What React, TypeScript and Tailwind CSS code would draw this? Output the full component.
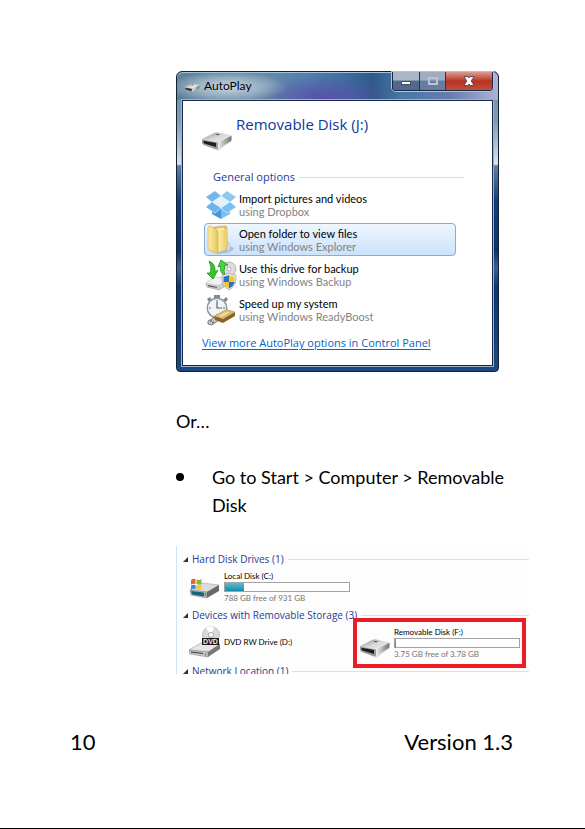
import type { ReactNode } from "react";

function DriveIcon({ className }: { className: string }) {
  return (
    <svg viewBox="0 0 32 20" className={className} aria-hidden="true">
      <defs>
        <linearGradient id="driveTop" x1="0" y1="0" x2="1" y2="1">
          <stop offset="0" stopColor="#8d8d8d" />
          <stop offset="0.5" stopColor="#d9d9d9" />
          <stop offset="1" stopColor="#f4f4f4" />
        </linearGradient>
        <linearGradient id="driveSide" x1="0" y1="0" x2="1" y2="0">
          <stop offset="0" stopColor="#efefef" />
          <stop offset="1" stopColor="#6f6f6f" />
        </linearGradient>
      </defs>
      <path d="M3 14 L17 20 L31 10 L29 8Z" fill="#000" opacity="0.12" />
      <path d="M1 8.500 Q1 7.500 3 7 L13 2 Q15 1 17 1.500 L29 4 Q31 4.500 30 5.500 L20 11 Q18 12 15 11.500Z" fill="url(#driveTop)" />
      <path d="M1 8.500 L17 11.500 V18 Q16 18.500 14 18 L3 14 Q1 13 1 12Z" fill="#9b9b9b" />
      <path d="M2.500 9.800 L15 12 V16 L5 13 Q3 12.500 2.500 11.500Z" fill="#1c1c1c" />
      <path d="M17 11.500 L30.500 4.800 V9 Q30 10 29 10.500 L17 18Z" fill="url(#driveSide)" />
      <path d="M16 3 L19 3.500 L17.500 4.300 L14.500 3.800Z" fill="#444" />
    </svg>
  );
}

function DropboxIcon() {
  return (
    <svg viewBox="0 0 32 30" className="h-[30px] w-8" aria-hidden="true">
      <path d="M10 1 L16 6 L7 12 L1 7Z" fill="#72b7ee" />
      <path d="M22 1 L31 7 L25 12 L16 6Z" fill="#8dc8f5" />
      <path d="M7 12 L16 18 L10 23 L1 17Z" fill="#6db3ec" />
      <path d="M25 12 L31 17 L22 23 L16 18Z" fill="#7dbef0" />
      <path d="M16 6 L25 12 L16 18 L7 12Z" fill="#e3f2fd" />
      <path d="M7 21.500 L10 23.500 L16 18.500 V29 L7 24Z" fill="#4794de" />
      <path d="M25 21.500 L22 23.500 L16 18.500 V29 L25 24Z" fill="#79bcf0" />
    </svg>
  );
}

function FolderIcon() {
  return (
    <svg viewBox="0 0 32 32" className="size-8" aria-hidden="true">
      <defs>
        <linearGradient id="folderFront" x1="0" y1="0" x2="1" y2="0">
          <stop offset="0" stopColor="#fdf0a8" />
          <stop offset="1" stopColor="#e8c55c" />
        </linearGradient>
      </defs>
      <path d="M20 20 L29 24 Q28 27 22 29 L12 30Z" fill="#6e87a5" opacity="0.4" />
      <path d="M23 18 L25 20 V26 L22 28Z" fill="#d5e1ec" stroke="#9badc2" strokeWidth="0.5" />
      <path d="M9 3 L20 2 Q22 2 22 4 V25 L9 27Z" fill="#e5c464" stroke="#c7a345" strokeWidth="0.6" />
      <path d="M10 5 L19 4 V25 H10Z" fill="#f8f3d5" />
      <path d="M13 6 L22 5 L23 25 L13 28Z" fill="url(#folderFront)" />
      <path d="M3 3 Q3 2 5 2 L12 6 Q13 6.5 13 8 V29 Q13 30 11 29 L4 26 Q3 25 3 24Z" fill="url(#folderFront)" stroke="#d1ad4c" strokeWidth="0.7" />
    </svg>
  );
}

function BackupIcon() {
  return (
    <svg viewBox="0 0 32 32" className="size-8" aria-hidden="true">
      <circle cx="24" cy="10" r="7" fill="#ddd" stroke="#999" strokeWidth="0.7" />
      <circle cx="24" cy="10" r="2" fill="#fff" stroke="#999" strokeWidth="0.7" />
      <path d="M1 24 L10 18 L22 20 V26 L14 31 L2 28Z" fill="#ccc" stroke="#888" strokeWidth="0.5" />
      <path d="M1 24 L10 18 L22 20 L14 26Z" fill="#f1f1f1" />
      <path d="M3 26 L12 28 V29 L3 27.200Z" fill="#555" />
      <path d="M4 2 Q11 5 10 13 L13 11 L8 20 L2 14 L5.500 14 Q7 8 4 2Z" fill="#34c92c" stroke="#168f13" strokeWidth="0.8" />
      <path d="M20 17 Q14 13 16 7 L13 8 L16 1 L23 6 L20 6 Q18 12 20 17Z" fill="#45d83a" stroke="#168f13" strokeWidth="0.8" />
      <path d="M24 14 Q27 16 31 16 Q32 27 24 31 Q16 27 17 16 Q21 16 24 14Z" fill="#eee" stroke="#888" strokeWidth="0.6" />
      <path d="M24 16 V23 H18.500 V17.500 Q21.500 17.500 24 16Z" fill="#2870c8" />
      <path d="M24 16 Q26.500 17.500 29.500 17.500 V23 H24Z" fill="#f5c62c" />
      <path d="M18.500 23 H24 V29.500 Q19.500 27.500 18.500 23Z" fill="#f5c62c" />
      <path d="M24 23 H29.500 Q28.500 27.500 24 29.500Z" fill="#2870c8" />
    </svg>
  );
}

function ReadyBoostIcon() {
  return (
    <svg viewBox="0 0 32 32" className="size-8" aria-hidden="true">
      <path d="M9 1 H15 V4 H9Z M2 5 L5 3 L7 6 L4 8Z M18 6 L21 3 L23 5 L21 8Z" fill="#7d898e" />
      <circle cx="12" cy="14" r="10.500" fill="#8b999e" />
      <circle cx="12" cy="14" r="9" fill="#f1f4f5" />
      <path d="M12 6 V8 M12 20 V22 M4 14 H6 M18 14 H20" stroke="#667" strokeWidth="1" />
      <path d="M12 8 V14 H17" stroke="#59666c" strokeWidth="1.200" fill="none" />
      <path d="M3 27 L10 23 L14 26 L7 31 L3 30Z" fill="#c8c8c8" stroke="#555" strokeWidth="0.7" />
      <path d="M5 27.500 L7 26.500 M7 29 L9 28" stroke="#444" strokeWidth="1" />
      <path d="M9 22 L20 16 Q22 15 24 16 L30 18 V22 L18 29 L10 26Z" fill="#8a6426" />
      <path d="M9 22 L20 16 Q22 15 24 16 L30 18 L18 25Z" fill="#d8b86d" />
      <path d="M13 22 L21 17.500 L25 18.500 L17 23Z" fill="#eed79b" />
    </svg>
  );
}

function LocalDiskIcon() {
  return (
    <svg viewBox="0 0 32 22" className="h-[22px] w-8" aria-hidden="true">
      <path d="M1 12 L13 5 L30 7 L18 14Z" fill="#dcdcdc" stroke="#999" strokeWidth="0.500" />
      <path d="M1 12 L18 14 V20 L2 17Z" fill="#bcbcbc" stroke="#777" strokeWidth="0.500" />
      <path d="M2 13 L15 14.500 V18.500 L3 16.500Z" fill="#17657c" />
      <path d="M18 14 L30 7 V13 L18 20Z" fill="#686868" />
      <path d="M16.500 15 V18" stroke="#31b431" strokeWidth="1.500" />
      <path d="M2 2 Q4 0 6.500 1 V6 Q4 5 2 7Z" fill="#ee6526" />
      <path d="M7.500 1.500 Q10 2.500 12.500 1 V6 Q10 7 7.500 6Z" fill="#83b938" />
      <path d="M2 8 Q4 6 6.500 7 V11 Q4 10 2 12Z" fill="#358bd7" />
      <path d="M7.500 7 Q10 8 12.500 7 V11 Q10 12 7.500 11Z" fill="#f8c733" />
    </svg>
  );
}

function DvdIcon() {
  return (
    <svg viewBox="0 0 32 32" className="size-8" aria-hidden="true">
      <circle cx="22" cy="9" r="8.500" fill="#d9d9d9" stroke="#aaa" strokeWidth="0.6" />
      <path d="M22 9 L17 2 A8.500 8.500 0 0 1 25 1Z" fill="#fff" />
      <circle cx="22" cy="9" r="2.500" fill="#fff" stroke="#888" strokeWidth="0.7" />
      <path d="M0 24 L12 17 L31 18 L19 26Z" fill="#e6e6e6" stroke="#888" strokeWidth="0.500" />
      <path d="M0 24 L19 26 V31 L1 28Z" fill="#c9c9c9" stroke="#777" strokeWidth="0.500" />
      <path d="M2 25.500 L14 27 V28 L2 26.500Z" fill="#333" />
      <path d="M19 26 L31 18 V23 L19 31Z" fill="#777" />
      <path d="M16.500 27.500 V29.500" stroke="#31b431" strokeWidth="1.500" />
      <path d="M13 12 H30 V19 H13Z" fill="#1b1b1b" />
      <text x="21.500" y="18" textAnchor="middle" fontSize="7" fontWeight="700" fill="#eee" fontFamily="Liberation Sans, sans-serif">
        DVD
      </text>
    </svg>
  );
}

interface Option {
  title: string;
  using: string;
  icon: ReactNode;
  selected?: boolean;
}

const OPTIONS: Option[] = [
  { title: "Import pictures and videos", using: "using Dropbox", icon: <DropboxIcon /> },
  { title: "Open folder to view files", using: "using Windows Explorer", icon: <FolderIcon />, selected: true },
  { title: "Use this drive for backup", using: "using Windows Backup", icon: <BackupIcon /> },
  { title: "Speed up my system", using: "using Windows ReadyBoost", icon: <ReadyBoostIcon /> },
];

function CaptionButtons() {
  return (
    <div className="flex h-[19px] w-[101px] overflow-hidden rounded-b border border-t-0 border-[#1c2940] shadow-[0_0_0_1px_#b5c3d6]">
      <button type="button" aria-label="Minimize" className="flex w-[27px] items-center justify-center border-r border-[#26344e] bg-linear-to-b from-[#a9b7c9] from-45% to-[#50688c] to-50%">
        <span className="mt-1 h-1 w-2.5 border border-[#444f5f] bg-white" />
      </button>
      <button type="button" aria-label="Maximize" className="flex w-[26px] items-center justify-center border-r border-[#26344e] bg-linear-to-b from-[#9fadc3] from-45% to-[#667ca0] to-50%">
        <span className="h-2 w-2.5 border-2 border-[#b9c3d5]" />
      </button>
      <button type="button" aria-label="Close" className="flex flex-1 items-center justify-center bg-linear-to-b from-[#d99a90] from-0% via-[#b93122] via-50% to-[#c04c3a]">
        <svg viewBox="0 0 12 10" className="h-2.5 w-3" aria-hidden="true">
          <path d="M1 0.500 H5 L6 2 L7 0.500 H11 L8.200 5 L11 9.500 H7 L6 8 L5 9.500 H1 L3.800 5Z" fill="#fff" stroke="#4c4653" strokeWidth="0.900" />
        </svg>
      </button>
    </div>
  );
}

function AutoPlayWindow() {
  return (
    <section
      aria-label="AutoPlay"
      className="w-full max-w-[323px] rounded-t-md rounded-b-sm border border-[#14202f] bg-[linear-gradient(180deg,#6d8fa9_0,#7f9cb5_50px,#d5dce8_88px,#dfe5ee_92px,#5b7ea5_94px,#133c78_130px,#0d316a_180px,#3d5f94_195px,#0f3670_215px,#133f77_260px,#1c4a80_100%)] px-[5px] pb-[5px] font-['Open_Sans','Noto_Sans',sans-serif]"
    >
      <header className="-mx-[5px] flex h-7 items-start justify-between rounded-t-md bg-[radial-gradient(60px_16px_at_50px_15px,#c9d5e2_0,#b3c4d499_60%,transparent_100%),radial-gradient(70px_22px_at_145px_26px,#5950a8_0,transparent_100%),linear-gradient(90deg,#5b8299_0,#638ba5_28%,#547fae_40%,#3f6ea0_52%,#2f5a8a_61%,#4778a4_70%,#687cae_85%,#aeb2d4_100%)] pr-[5px] pl-[7px] shadow-[inset_0_1px_0_#a9c3d6]">
        <div className="flex h-7 items-center gap-1">
          <DriveIcon className="mt-1 h-2.5 w-4" />
          <h2 className="font-[Lato,sans-serif] text-[12px] leading-4 text-black">AutoPlay</h2>
        </div>
        <CaptionButtons />
      </header>
      <div className="border border-[#17294a] bg-white pt-[11px] pb-[14px] shadow-[0_0_0_1px_#9db3cd]">
        <div className="flex items-start gap-[3px] pl-[18px]">
          <DriveIcon className="mt-[19px] h-5 w-8" />
          <p className="text-[15px] leading-6 text-[#0b3a9c]">Removable Disk (J:)</p>
        </div>
        <div className="mt-[18px] mr-7 ml-[30px] flex h-4 items-center gap-1 text-[11px] leading-4 text-[#1b3c9c]">
          <h3>General options</h3>
          <span className="h-px flex-1 bg-[#d3dcf3]" />
        </div>
        <ul className="mt-[3px] mr-9 ml-[21px] font-[Lato,sans-serif]">
          {OPTIONS.map((o) => (
            <li key={o.title} className="h-[35px]">
              <button
                type="button"
                className={
                  o.selected
                    ? "flex h-[33px] w-full items-center gap-[2px] rounded-sm border border-[#84acdd] bg-linear-to-b from-[#eff6ff] to-[#cbe2fb] text-left"
                    : "flex h-[33px] w-full items-center gap-[2px] border border-transparent text-left"
                }
              >
                {o.icon}
                <span className="flex flex-col text-[11px] leading-[13px]">
                  <span className="text-black">{o.title}</span>
                  <span className="text-[#838383]">{o.using}</span>
                </span>
              </button>
            </li>
          ))}
        </ul>
        <a href="#control-panel" className="mt-[7px] ml-[19px] block text-[11px] leading-4 text-[#0b62c8] underline underline-offset-2">
          View more AutoPlay options in Control Panel
        </a>
      </div>
    </section>
  );
}

function GroupHeader({ label }: { label: string }) {
  return (
    <div className="flex h-4 items-center gap-1 pl-1.5">
      <svg viewBox="0 0 5 5" className="size-[5px]" aria-hidden="true">
        <path d="M5 0 V5 H0Z" fill="#333" />
      </svg>
      <h3 className="text-[10px] leading-4 whitespace-nowrap text-[#2b3a91]">{label}</h3>
      <span className="h-px flex-1 bg-[#dedfe3]" />
    </div>
  );
}

function DriveUsage({ name, free, used }: { name: string; free: string; used: number }) {
  return (
    <div className="w-[126px] font-[Lato,sans-serif] text-[8px] leading-3">
      <p className="text-black">{name}</p>
      <div className="h-2.5 border border-[#a3a3a3] bg-white">
        <div className="h-full bg-linear-to-b from-[#58bdd0] to-[#128aa8]" style={{ width: `${used}%` }} />
      </div>
      <p className="text-[#747474]">{free}</p>
    </div>
  );
}

function ComputerPanel() {
  return (
    <section
      aria-label="Computer"
      className="h-32 w-full overflow-hidden border-l border-[#cfe3f5] bg-[#fdfdfd] pt-[5px] font-['Open_Sans','Noto_Sans',sans-serif]"
    >
      <GroupHeader label="Hard Disk Drives (1)" />
      <div className="flex h-10 items-start gap-[3px] pt-[3px] pl-3">
        <div className="pt-2">
          <LocalDiskIcon />
        </div>
        <DriveUsage name="Local Disk (C:)" free="788 GB free of 931 GB" used={15} />
      </div>
      <GroupHeader label="Devices with Removable Storage (3)" />
      <div className="flex h-10 items-start pl-3">
        <div className="flex w-[170px] items-center gap-[3px] pt-[3px]">
          <DvdIcon />
          <p className="font-[Lato,sans-serif] text-[8px] leading-3">DVD RW Drive (D:)</p>
        </div>
        <div className="relative flex items-start gap-[3px] pt-[3px]">
          <div className="pt-3">
            <DriveIcon className="h-5 w-8" />
          </div>
          <DriveUsage name="Removable Disk (F:)" free="3.75 GB free of 3.78 GB" used={1} />
          <span className="absolute -inset-x-1.5 -top-[5px] -bottom-2 border-4 border-[#ee1c25]" />
        </div>
      </div>
      <GroupHeader label="Network Location (1)" />
    </section>
  );
}

export default function App() {
  return (
    <div className="flex min-h-screen flex-col border-b border-black bg-white font-[Lato,Carlito,sans-serif] text-black">
      <main className="pt-[71px] pr-14 pl-44">
        <AutoPlayWindow />
        <p className="mt-[35px] text-[18px] leading-7">Or…</p>
        <ul className="mt-7">
          <li className="flex text-[18px] leading-7">
            <span className="flex h-7 w-9 shrink-0 items-center">
              <span className="size-2 rounded-full bg-black" />
            </span>
            <span>Go to Start &gt; Computer &gt; Removable Disk</span>
          </li>
        </ul>
        <div className="mt-[27px]">
          <ComputerPanel />
        </div>
      </main>
      <footer className="mt-[54px] flex justify-between pr-[72px] pl-[70px] text-[22px] leading-7">
        <span>10</span>
        <span>Version 1.3</span>
      </footer>
    </div>
  );
}
